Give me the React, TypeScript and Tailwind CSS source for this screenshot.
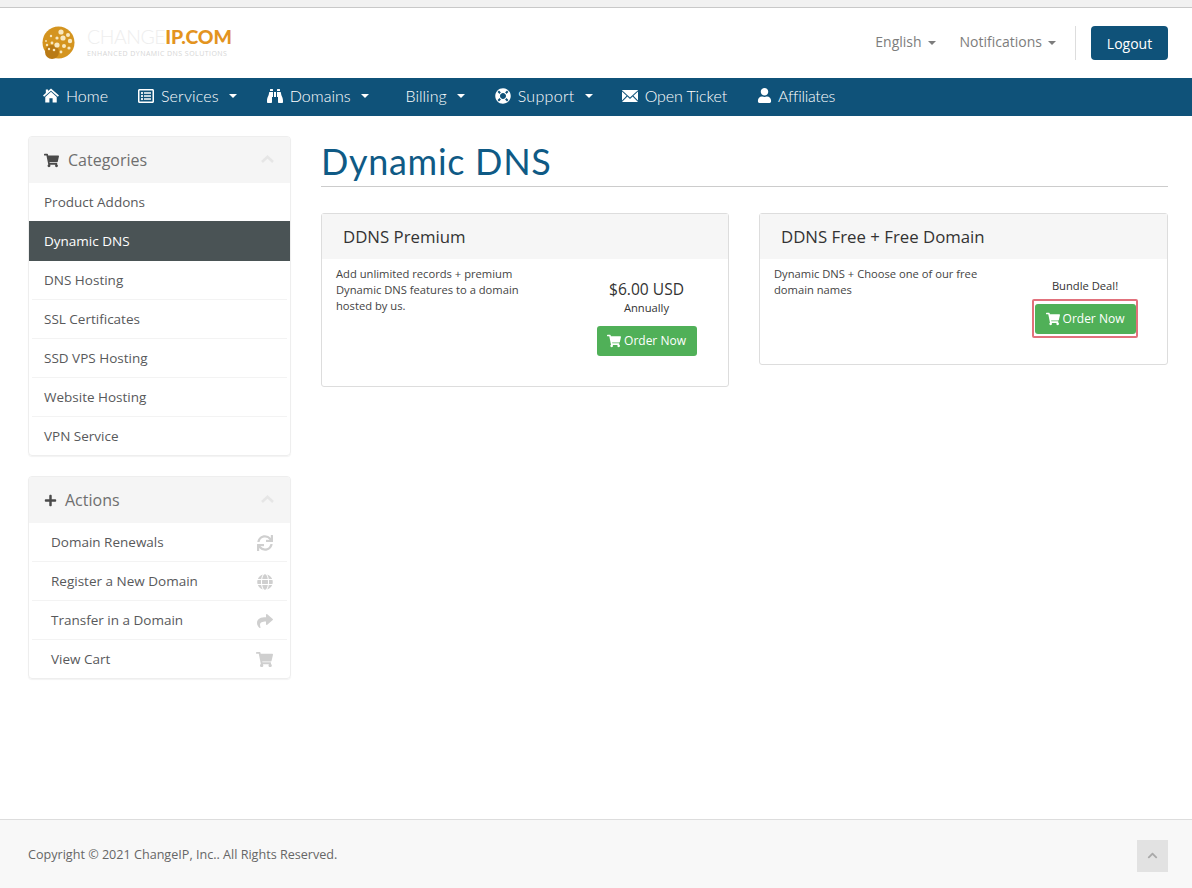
import React from "react";
import { FaRegListAlt, FaBinoculars, FaLifeRing, FaUser, FaShoppingCart, FaPlus, FaSync, FaGlobe, FaShare, FaChevronUp } from "react-icons/fa";

const Caret = ({ c = "border-t-white", ml = "ml-2" }: { c?: string; ml?: string }) => (
  <span className={`inline-block w-0 h-0 border-x-4 border-x-transparent border-t-4 ${c} ${ml}`} />
);

const Home = () => (
  <svg width="17" height="15" viewBox="0 0 17 15" fill="white">
    <path d="M8.5 0 L17 7.6 L15.8 8.8 L8.5 2.4 L1.2 8.8 L0 7.6 L3 4.9 L3 1 L5.4 1 L5.4 2.8 Z" />
    <path d="M8.5 3.6 L14.6 9 L14.6 15 L10.2 15 L10.2 10.4 L6.8 10.4 L6.8 15 L2.4 15 L2.4 9 Z" />
  </svg>
);

const Mail = () => (
  <svg width="16" height="14" viewBox="0 0 16 14" fill="white">
    <path d="M0 1.2 L0 1 L16 1 L16 1.2 L8 8.5 Z" />
    <path d="M0 2.6 L4.6 6.8 L0 11.6 Z" />
    <path d="M16 2.6 L11.4 6.8 L16 11.6 Z" />
    <path d="M5.4 7.6 L8 10 L10.6 7.6 L16 13 L0 13 Z" />
  </svg>
);

const Globe = () => (
  <svg width="33" height="33" viewBox="0 0 33 33">
    <circle cx="16.5" cy="16.5" r="16" fill="#d4941f" />
    <circle cx="10" cy="26" r="7" fill="#b97a14" />
    <g fill="#f8e8c0">
      <circle cx="19" cy="6" r="2.6" /><circle cx="26" cy="9" r="2" /><circle cx="15" cy="12" r="1.6" />
      <circle cx="21" cy="12" r="2.6" /><circle cx="28" cy="15" r="2.2" /><circle cx="9" cy="10" r="1.2" />
      <circle cx="10" cy="17" r="1.4" /><circle cx="15" cy="19" r="2.6" /><circle cx="22" cy="20" r="2" />
      <circle cx="27" cy="22" r="1.6" /><circle cx="5" cy="19" r="1.2" /><circle cx="7" cy="23" r="1.2" />
      <circle cx="12" cy="24" r="1.3" /><circle cx="19" cy="26" r="1.4" /><circle cx="4" cy="15" r="0.9" />
    </g>
  </svg>
);

const Chevron = () => (
  <svg width="13" height="8" viewBox="0 0 13 8" fill="none" className="ml-auto mb-[3px] mr-[1px]">
    <path d="M1 7 L6.5 1.8 L12 7" stroke="#e6e6e6" strokeWidth="2.6" />
  </svg>
);

const Nav = ({ icon, label, caret, cls, lcls }: { icon?: React.ReactNode; label: string; caret?: boolean; cls: string; lcls?: string }) => (
  <a className={`flex items-center text-white text-[16px] font-light font-['Lato',sans-serif] ${cls}`}>
    {icon && <span className="flex w-[16px] justify-center mr-[7px] text-[16px]">{icon}</span>}
    <span className={lcls}>{label}</span>
    {caret && <Caret ml="ml-[10px]" />}
  </a>
);

const PanelHead = ({ icon, title, gap }: { icon: React.ReactNode; title: string; gap: string }) => (
  <div className="h-[46px] bg-[#f5f5f5] rounded-t-[3px] flex items-center px-[15px] text-[16px] text-[#6f6f6f]">
    <span className={`text-[#4a4a4a] text-[15px] flex ${gap}`}>{icon}</span>
    <span>{title}</span>
    <Chevron />
  </div>
);

const CatRow = ({ label, active, last }: { label: string; active?: boolean; last?: boolean }) =>
  active ? (
    <div className="h-[40px] bg-[#4a5355] text-white flex items-center pl-[15px] -mt-px pt-[1px]">{label}</div>
  ) : (
    <div className={`mx-[3px] pl-[12px] flex items-center text-[#58595b] ${last ? "h-[38px]" : "h-[39px] pt-[1px] border-b border-[#f3f3f3]"}`}>{label}</div>
  );

const ActRow = ({ label, icon, last }: { label: string; icon: React.ReactNode; last?: boolean }) => (
  <div className={`mx-[3px] pl-[19px] pr-[14px] flex items-center justify-between text-[#58595b] ${last ? "h-[38px]" : "h-[39px] pt-[1px] border-b border-[#f3f3f3]"}`}>
    <span>{label}</span>
    <span className="text-[#cfcfcf] text-[16px] flex w-[17px] justify-center">{icon}</span>
  </div>
);

const OrderBtn = ({ w }: { w: string }) => (
  <div className={`${w} h-[30px] bg-[#50b058] rounded-[3px] text-white text-[12px] flex items-center justify-center`}>
    <FaShoppingCart className="text-[14px] mr-[3px]" />
    Order Now
  </div>
);

const Card = ({ title, cls, desc, children }: { title: string; cls: string; desc: string[]; children: React.ReactNode }) => (
  <div className={`${cls} border border-[#dddddd] rounded-[3px] bg-white`}>
    <div className="h-[45px] bg-[#f6f6f6] flex items-center pl-[21px] text-[16.8px] text-[#333333]">{title}</div>
    <div className="flex pl-[14px] pt-[7px]">
      <div className="w-[229px] text-[11.2px] leading-[16px] text-[#444444]">
        {desc.map((d) => (
          <div key={d}>{d}</div>
        ))}
      </div>
      <div className="flex-1 flex flex-col items-center text-[#333333]">{children}</div>
    </div>
  </div>
);

export default function App() {
  return (
    <div className="w-[1192px] h-[888px] flex flex-col bg-white font-['Open_Sans',sans-serif] text-[13.5px] overflow-hidden">
      <div className="h-[8px] bg-[#f1f1f1] border-b border-[#c8c8c8] shrink-0" />

      <header className="h-[70px] shrink-0 flex items-center pl-[42px] pr-[24px]">
        <div className="flex items-center -mt-[1px]">
          <Globe />
          <div className="ml-[12px] flex flex-col -mt-[1px]">
            <div className="text-[19.4px] leading-[20px] font-['Lato',sans-serif] whitespace-nowrap">
              <span className="text-[#eeeeee] font-light tracking-[-0.4px]">CHANGE</span>
              <span className="text-[#e3941f] font-black tracking-[-0.1px]">IP.COM</span>
            </div>
            <div className="text-[7px] leading-[9px] mt-[2px] text-[#d6d6d6] tracking-[0.45px] whitespace-nowrap">ENHANCED DYNAMIC DNS SOLUTIONS</div>
          </div>
        </div>
        <div className="ml-auto flex items-center text-[14px] text-[#7d7d7d]">
          <span className="mb-[3px]">English</span>
          <Caret c="border-t-[#7d7d7d]" ml="ml-[6px]" />
          <span className="ml-[24px] mb-[3px]">Notifications</span>
          <Caret c="border-t-[#7d7d7d]" ml="ml-[6px]" />
          <span className="ml-[19px] mr-[15px] w-px h-[34px] bg-[#dddddd]" />
          <span className="w-[77px] h-[34px] rounded-[4px] bg-[#0f5279] text-white flex items-center justify-center">Logout</span>
        </div>
      </header>

      <nav className="h-[38px] bg-[#0f5279] shrink-0 flex items-center pl-[43px] pb-[3px]">
        <Nav icon={<Home />} label="Home" cls="" />
        <Nav icon={<FaRegListAlt />} label="Services" caret cls="ml-[30px]" lcls="tracking-[0.15px]" />
        <Nav icon={<FaBinoculars />} label="Domains" caret cls="ml-[30px]" />
        <Nav label="Billing" caret cls="ml-[37px]" />
        <Nav icon={<FaLifeRing />} label="Support" caret cls="ml-[30px]" lcls="tracking-[0.3px]" />
        <Nav icon={<Mail />} label="Open Ticket" cls="ml-[29px]" lcls="tracking-[-0.1px]" />
        <Nav icon={<FaUser className="text-[15px]" />} label="Affiliates" cls="ml-[29px]" lcls="-ml-[1px] tracking-[-0.3px]" />
      </nav>

      <main className="flex-1 flex pl-[28px] pr-[24px] pt-[20px]">
        <aside className="w-[263px] shrink-0 flex flex-col gap-[20px]">
          <div className="border border-[#eeeeee] rounded-[4px] shadow-[0_1px_1px_rgba(0,0,0,0.05)]">
            <PanelHead icon={<FaShoppingCart />} title="Categories" gap="mr-[9px]" />
            <CatRow label="Product Addons" />
            <CatRow label="Dynamic DNS" active />
            <CatRow label="DNS Hosting" />
            <CatRow label="SSL Certificates" />
            <CatRow label="SSD VPS Hosting" />
            <CatRow label="Website Hosting" />
            <CatRow label="VPN Service" last />
          </div>
          <div className="border border-[#eeeeee] rounded-[4px] shadow-[0_1px_1px_rgba(0,0,0,0.05)]">
            <PanelHead icon={<FaPlus className="text-[13px]" />} title="Actions" gap="mr-[8px]" />
            <ActRow label="Domain Renewals" icon={<FaSync />} />
            <ActRow label="Register a New Domain" icon={<FaGlobe />} />
            <ActRow label="Transfer in a Domain" icon={<FaShare />} />
            <ActRow label="View Cart" icon={<FaShoppingCart className="text-[17px]" />} last />
          </div>
        </aside>

        <section className="flex-1 ml-[30px]">
          <h1 className="h-[52px] border-b border-[#cccccc] text-[36px] leading-[52px] text-[#0f5a85] font-['Lato',sans-serif] tracking-[0.7px] -mt-[1px]">Dynamic DNS</h1>
          <div className="flex items-start gap-[30px] mt-[26px]">
            <Card title="DDNS Premium" cls="w-[408px] h-[174px] shrink-0" desc={["Add unlimited records + premium", "Dynamic DNS features to a domain", "hosted by us."]}>
              <div className="text-[15.6px] leading-[22px] mt-[12px]">$6.00 USD</div>
              <div className="text-[11.2px] leading-[16px]">Annually</div>
              <div className="mt-[10px]"><OrderBtn w="w-[100px]" /></div>
            </Card>
            <Card title="DDNS Free + Free Domain" cls="flex-1 h-[152px]" desc={["Dynamic DNS + Choose one of our free", "domain names"]}>
              <div className="text-[11.2px] leading-[16px] mt-[12px]">Bundle Deal!</div>
              <div className="mt-[5px] w-[106px] h-[39px] border-2 border-[#e2717c] rounded-[2px] pt-[3px] flex justify-center"><OrderBtn w="w-[101px]" /></div>
            </Card>
          </div>
        </section>
      </main>

      <footer className="h-[69px] shrink-0 border-t border-[#dddddd] bg-[#f8f8f8] flex items-center pl-[28px] pr-[24px] pt-[2px] text-[12.6px] text-[#666666]">
        <span className="mt-[1px]">Copyright © 2021 ChangeIP, Inc.. All Rights Reserved.</span>
        <span className="ml-auto mt-[1px] w-[31px] h-[32px] bg-[#e2e2e2] flex items-center justify-center text-[#a9a9a9] text-[11px]"><FaChevronUp /></span>
      </footer>
    </div>
  );
}
